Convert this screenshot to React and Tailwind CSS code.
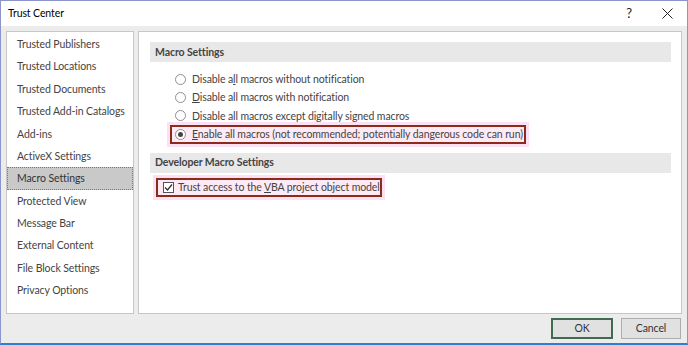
import React from 'react';

const navItems = [
  'Trusted Publishers',
  'Trusted Locations',
  'Trusted Documents',
  'Trusted Add-in Catalogs',
  'Add-ins',
  'ActiveX Settings',
  'Macro Settings',
  'Protected View',
  'Message Bar',
  'External Content',
  'File Block Settings',
  'Privacy Options',
];

const Radio = ({ checked }) => (
  <span className="w-[11px] h-[11px] rounded-full border border-[#8f8f8f] bg-white flex items-center justify-center shrink-0">
    {checked && <span className="w-[5px] h-[5px] rounded-full bg-[#444]"></span>}
  </span>
);

const RadioRow = ({ checked, children }) => (
  <div className="h-[18.4px] flex items-center gap-[6px] whitespace-nowrap">
    <Radio checked={checked} />
    <span>{children}</span>
  </div>
);

export default function App() {
  return (
    <div
      className="w-[688px] h-[345px] flex flex-col bg-[#ececec] border border-[#8d94c9] border-b-2 border-b-[#2d7fd2] text-[#444] text-[10.5px] tracking-[-0.1px] leading-none overflow-hidden"
      style={{ fontFamily: 'Lato, "Noto Sans", sans-serif' }}
    >
      {/* title bar */}
      <div className="h-[25px] bg-white flex items-center shrink-0 pl-[7px]">
        <span className="text-[10.5px] text-black">Trust Center</span>
        <span className="ml-auto text-[13px] text-[#222] mr-[30px]">?</span>
        <svg width="11" height="11" viewBox="0 0 11 11" className="mr-[14px]">
          <path d="M0.5 0.5 L10.5 10.5 M10.5 0.5 L0.5 10.5" stroke="#222" strokeWidth="1" />
        </svg>
      </div>

      {/* body */}
      <div className="flex gap-[4px] pl-[5px] pr-[5px] pt-[5px]">
        <div className="w-[128px] h-[283px] bg-white border border-[#c6c6c6] pt-[1px] shrink-0">
          {navItems.map((item) =>
            item === 'Macro Settings' ? (
              <div
                key={item}
                className="h-[22.4px] flex items-center pl-[9px] bg-[#c9c9c9] border border-dotted border-[#777] text-[#333] whitespace-nowrap"
              >
                {item}
              </div>
            ) : (
              <div key={item} className="h-[22.4px] flex items-center pl-[10px] whitespace-nowrap">
                {item}
              </div>
            )
          )}
        </div>

        <div className="flex-1 h-[283px] bg-white border border-[#c6c6c6] pt-[10px] pl-[11px] pr-[10px]">
          <div className="h-[20px] bg-[#e8e8e8] flex items-center pl-[5px] font-bold text-[#444]">
            Macro Settings
          </div>
          <div className="pl-[25px] pt-[8px]">
            <RadioRow>
              Disable a<u>l</u>l macros without notification
            </RadioRow>
            <RadioRow>
              <u>D</u>isable all macros with notification
            </RadioRow>
            <RadioRow>
              Disable all macros except digitally si<u>g</u>ned macros
            </RadioRow>
            <div className="-ml-[5px] w-[356px] h-[18.4px] flex items-center gap-[6px] pl-[3px] border-2 border-[#8b2b1c] bg-[#fdeaf5] outline-[3px] outline-solid outline-[#fde0f1] whitespace-nowrap">
              <Radio checked />
              <span>
                <u>E</u>nable all macros (not recommended; potentially dangerous code can run)
              </span>
            </div>
          </div>
          <div className="h-[20px] mt-[9px] bg-[#e8e8e8] flex items-center pl-[5px] font-bold text-[#444]">
            Developer Macro Settings
          </div>
          <div className="mt-[5px] ml-[6px] w-[226px] h-[19px] flex items-center gap-[4px] pl-[5px] border-2 border-[#8b2b1c] bg-[#fdeaf5] outline-[3px] outline-solid outline-[#fde0f1] whitespace-nowrap">
            <span className="w-[11px] h-[11px] border border-[#555] bg-white flex items-center justify-center shrink-0">
              <svg width="9" height="9" viewBox="0 0 9 9">
                <path d="M1 4.5 L3.5 7 L8 1.5" fill="none" stroke="#333" strokeWidth="1.3" />
              </svg>
            </span>
            <span>
              Trust access to the <u>V</u>BA project object model
            </span>
          </div>
        </div>
      </div>

      {/* footer */}
      <div className="flex justify-end gap-[8px] pr-[6px] pt-[4px]">
        <button className="w-[62px] h-[21px] bg-[#e1e1e1] border-2 border-[#3f6b50] text-[#333] flex items-center justify-center">
          OK
        </button>
        <button className="w-[60px] h-[21px] bg-[#e1e1e1] border border-[#adadad] text-[#333] flex items-center justify-center">
          Cancel
        </button>
      </div>
    </div>
  );
}
